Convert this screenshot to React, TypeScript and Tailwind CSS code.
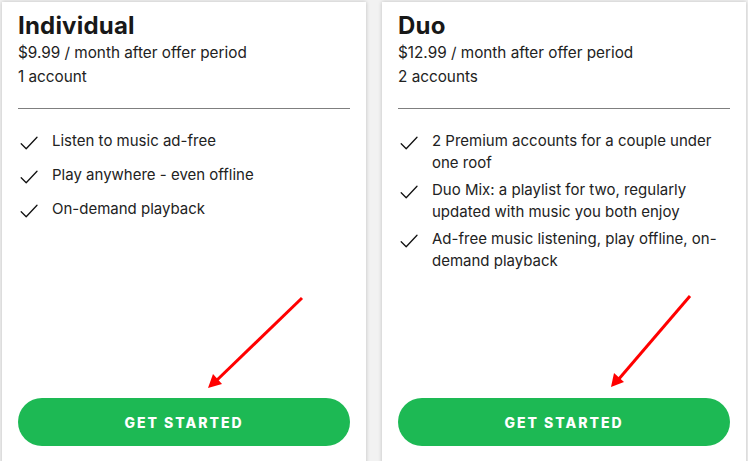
import React from "react";

const Check = () => (
  <svg width="18" height="14" viewBox="0 0 18 14" className="mt-[6px] ml-[2px] shrink-0" fill="none">
    <path d="M1.2 7.8 L6.2 12.8 L17 1.2" stroke="#111" strokeWidth="1.3" strokeLinecap="round" strokeLinejoin="round" />
  </svg>
);

type Plan = { name: string; price: string; accounts: string; features: string[] };

const plans: Plan[] = [
  {
    name: "Individual",
    price: "$9.99 / month after offer period",
    accounts: "1 account",
    features: ["Listen to music ad-free", "Play anywhere - even offline", "On-demand playback"],
  },
  {
    name: "Duo",
    price: "$12.99 / month after offer period",
    accounts: "2 accounts",
    features: [
      "2 Premium accounts for a couple under one roof",
      "Duo Mix: a playlist for two, regularly updated with music you both enjoy",
      "Ad-free music listening, play offline, on-demand playback",
    ],
  },
];

function Card({ plan }: { plan: Plan }) {
  return (
    <div className="w-[364px] h-[470px] bg-white shadow-[0_0_4px_rgba(0,0,0,0.22)] flex flex-col px-4 pt-[8px] pb-[26px] text-[#222]">
      <h2 className="text-[24px] leading-[31px] font-bold text-[#181818] tracking-[0.2px]">{plan.name}</h2>
      <p className="text-[15.3px] leading-[24px]">{plan.price}</p>
      <p className="text-[15.3px] leading-[24px]">{plan.accounts}</p>
      <div className="mt-[19px] h-px bg-[#7f7f7f]" />
      <ul className="mt-[21px] flex flex-col gap-[6px]">
        {plan.features.map((f) => (
          <li key={f} className="flex items-start gap-[14px] min-h-[28px]">
            <Check />
            <span className="text-[15px] leading-[21.5px]">{f}</span>
          </li>
        ))}
      </ul>
      <button className="mt-auto h-[48px] w-full rounded-full bg-[#1db954] text-white text-[14px] font-extrabold tracking-[2px]">
        GET STARTED
      </button>
    </div>
  );
}

export default function App() {
  return (
    <div
      className="relative w-[748px] h-[461px] overflow-hidden bg-[#f2f2f2]"
      style={{ fontFamily: "Inter, 'Liberation Sans', sans-serif" }}
    >
      <div className="flex gap-4 px-[2px] pt-[2px]">
        {plans.map((p) => (
          <Card key={p.name} plan={p} />
        ))}
      </div>
      <svg className="absolute inset-0 pointer-events-none" width="748" height="461">
        <line x1="302" y1="298" x2="216" y2="381" stroke="#ff0000" strokeWidth="3" />
        <polygon points="208,388 213,374 222,384" fill="#ff0000" />
        <line x1="690" y1="296" x2="618" y2="380" stroke="#ff0000" strokeWidth="3" />
        <polygon points="611,387 614,373 624,382" fill="#ff0000" />
      </svg>
    </div>
  );
}
